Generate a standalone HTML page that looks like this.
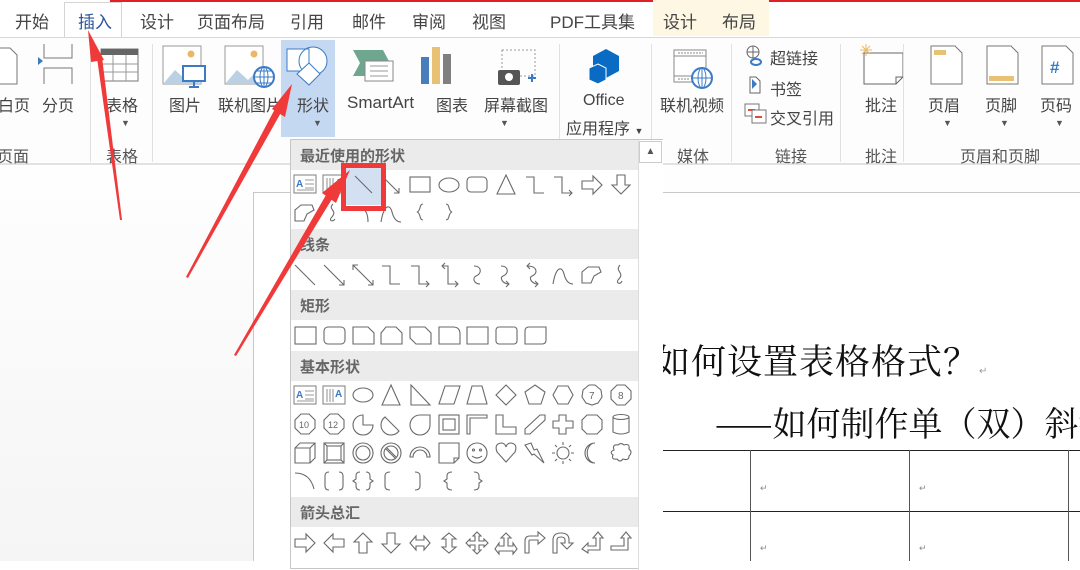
<!DOCTYPE html>
<html><head><meta charset="utf-8">
<style>
*{margin:0;padding:0;box-sizing:border-box}
body{width:1080px;height:561px;overflow:hidden;position:relative;font-family:"Liberation Sans","Noto Sans CJK SC",sans-serif;background:#fff;color:#444}
.a{position:absolute;white-space:nowrap}
.tab{position:absolute;top:8px;font-size:17px;color:#444}
.lb{position:absolute;font-size:16px;color:#444;white-space:nowrap}
.gl{position:absolute;top:143px;font-size:16px;color:#555;white-space:nowrap}
.sep{position:absolute;top:44px;width:1px;height:118px;background:#e1e1e1}
.dd{position:absolute;font-size:9px;color:#555}
.hd{position:absolute;left:0;width:347px;height:30px;background:#ebebeb;font-size:15px;font-weight:bold;color:#666;padding:5px 0 0 9px}
.doc{position:absolute;white-space:nowrap;color:#111;font-family:'Noto Serif CJK SC','Noto Sans CJK SC',serif}
</style></head><body>
<div class="a" style="left:110px;top:0;width:970px;height:2px;background:#e21f26"></div>
<div class="a" style="left:653px;top:0;width:116px;height:36px;background:#fdf7e4"></div>
<div class="a" style="left:64px;top:2px;width:58px;height:36px;background:#fff;border:1px solid #d4d4d4;border-bottom:none"></div>
<div class="tab" style="left:15px">开始</div>
<div class="tab" style="left:78px;color:#2b579a">插入</div>
<div class="tab" style="left:140px">设计</div>
<div class="tab" style="left:197px">页面布局</div>
<div class="tab" style="left:290px">引用</div>
<div class="tab" style="left:352px">邮件</div>
<div class="tab" style="left:412px">审阅</div>
<div class="tab" style="left:472px">视图</div>
<div class="tab" style="left:550px">PDF工具集</div>
<div class="tab" style="left:663px">设计</div>
<div class="tab" style="left:722px">布局</div>
<div class="a" style="left:0;top:37px;width:1080px;height:128px;background:#fdfdfd;border-top:1px solid #d8d8d8;border-bottom:2px solid #e2e2e2"></div>
<div class="a" style="left:0;top:167px;width:1080px;height:394px;background:linear-gradient(#fefefe,#f5f5f5)"></div>
<div class="a" style="left:281px;top:40px;width:54px;height:97px;background:#c5d8f1"></div>

<svg class="a" style="left:0;top:36px" width="1080" height="100" viewBox="0 36 1080 100">
 <path d="M-2 48 H10 L17 55 V84 H-2" fill="#fff" stroke="#777"/>
 <path d="M44 44 V58 H72 V44 M44 84 V68 H72 V84" fill="none" stroke="#777"/><path d="M38 57 L43 61 L38 65Z" fill="#3b7bc6"/>
 <rect x="101" y="49" width="37" height="32" fill="#fff" stroke="#777"/><rect x="101" y="49" width="37" height="6" fill="#666"/>
 <path d="M101 64H138M101 72H138M113 55V81M126 55V81" stroke="#999"/>
 <rect x="163" y="46" width="38" height="38" fill="#fff" stroke="#999"/><path d="M163 84 L175 70 L186 80 L192 74 L201 84Z" fill="#bcd0e3"/><circle cx="191" cy="54" r="3.5" fill="#e8b866"/>
 <rect x="183" y="66" width="22" height="15" fill="#fff" stroke="#3b7bc6" stroke-width="2"/><path d="M194 81V86M189 87H199" stroke="#3b7bc6" stroke-width="2"/>
 <rect x="225" y="46" width="38" height="38" fill="#fff" stroke="#999"/><path d="M225 84 L237 70 L248 80 L254 74 L263 84Z" fill="#bcd0e3"/><circle cx="254" cy="54" r="3.5" fill="#e8b866"/>
 <circle cx="264" cy="77" r="10" fill="#fff" stroke="#3b7bc6" stroke-width="2"/><path d="M254 77H274M264 67V87M257 71H271M257 83H271" stroke="#3b7bc6"/><ellipse cx="264" cy="77" rx="4" ry="10" fill="none" stroke="#3b7bc6"/>
 <rect x="287" y="49" width="22" height="22" fill="#fff" stroke="#3b7bc6"/><circle cx="313" cy="61" r="14" fill="#fff" stroke="#3b7bc6"/><rect x="287" y="49" width="22" height="22" fill="none" stroke="#3b7bc6"/><path d="M309 63 L320 74 L309 85 L297 74Z" fill="#fff" stroke="#3b7bc6"/>
 <path d="M353 50 H383 L390 63 L383 76 H353 L360 63Z" fill="#6fa68f"/><rect x="365" y="61" width="28" height="20" fill="#fff" stroke="#888"/><path d="M370 66H388M370 71H388M370 76H388" stroke="#999"/>
 <rect x="421" y="57" width="8" height="27" fill="#4a7ebb"/><rect x="432" y="47" width="8" height="37" fill="#e8c175"/><rect x="443" y="54" width="8" height="30" fill="#808080"/>
 <rect x="502" y="50" width="33" height="26" fill="none" stroke="#999" stroke-dasharray="2 2"/><rect x="498" y="70" width="22" height="15" rx="2" fill="#555"/><circle cx="509" cy="77" r="4" fill="#fff"/><path d="M528 78H536M532 74V82" stroke="#3b7bc6" stroke-width="2"/>
 <path d="M606 49 L619 56 V71 L606 78 L593 71 V56Z" fill="#0a6bc4"/><path d="M598 64 L606 68 V80 L598 84 L589 80 V68Z" fill="#0a6bc4" stroke="#fff"/>
 <rect x="674" y="50" width="32" height="32" fill="#fff" stroke="#888"/><path d="M674 56H706M674 76H706" stroke="#888"/><path d="M678 53H703M678 79H690" stroke="#888" stroke-dasharray="2 1"/>
 <circle cx="702" cy="78" r="10" fill="#fff" stroke="#3b7bc6" stroke-width="2"/><path d="M692 78H712M702 68V88" stroke="#3b7bc6"/><ellipse cx="702" cy="78" rx="4" ry="10" fill="none" stroke="#3b7bc6"/>
 <circle cx="753" cy="52" r="6" fill="none" stroke="#666"/><path d="M747 52H759M753 46V58" stroke="#666"/><ellipse cx="756" cy="62" rx="5" ry="3" fill="none" stroke="#3b7bc6" stroke-width="2"/>
 <path d="M750 77 V93 H760 V81 L756 77Z" fill="#fff" stroke="#666"/><path d="M752 79 L757 84 L752 89Z" fill="#3b7bc6"/>
 <rect x="745" y="104" width="14" height="12" fill="#fff" stroke="#777"/><path d="M748 110H755" stroke="#e04b3a" stroke-width="2"/><rect x="752" y="110" width="14" height="13" fill="#fff" stroke="#777"/><path d="M755 117H762" stroke="#e04b3a" stroke-width="2"/>
 <path d="M864 53 H903 V77 L896 84 H864Z" fill="#fff" stroke="#666"/><path d="M896 84 V77 H903" fill="none" stroke="#666"/><path d="M866 44V56M860 50H872M862 46L870 54M870 46L862 54" stroke="#e8b866"/>
 <path d="M931 46H955L962 53V84H931Z" fill="#fff" stroke="#777"/><rect x="934" y="50" width="12" height="5" fill="#e8c175"/>
 <path d="M987 46H1011L1018 53V84H987Z" fill="#fff" stroke="#777"/><rect x="989" y="76" width="25" height="5" fill="#e8c175"/>
 <path d="M1042 46H1066L1073 53V84H1042Z" fill="#fff" stroke="#777"/>
</svg>
<div class="a" style="left:1050px;top:58px;font-size:17px;color:#3b7bc6;font-weight:bold">#</div>

<div class="lb" style="left:-2px;top:92px">白页</div>
<div class="lb" style="left:42px;top:92px">分页</div>
<div class="lb" style="left:106px;top:92px">表格</div><div class="dd" style="left:121px;top:118px">▼</div>
<div class="lb" style="left:169px;top:92px">图片</div>
<div class="lb" style="left:218px;top:92px">联机图片</div>
<div class="lb" style="left:297px;top:92px">形状</div><div class="dd" style="left:313px;top:118px">▼</div>
<div class="lb" style="left:347px;top:93px;font-size:17px">SmartArt</div>
<div class="lb" style="left:436px;top:92px">图表</div>
<div class="lb" style="left:484px;top:92px">屏幕截图</div><div class="dd" style="left:500px;top:118px">▼</div>
<div class="lb" style="left:583px;top:92px">Office</div>
<div class="lb" style="left:566px;top:115px">应用程序 <span style="font-size:9px">▼</span></div>
<div class="lb" style="left:660px;top:92px">联机视频</div>
<div class="lb" style="left:770px;top:45px">超链接</div>
<div class="lb" style="left:770px;top:76px">书签</div>
<div class="lb" style="left:770px;top:105px">交叉引用</div>
<div class="lb" style="left:865px;top:92px">批注</div>
<div class="lb" style="left:928px;top:92px">页眉</div><div class="dd" style="left:943px;top:118px">▼</div>
<div class="lb" style="left:985px;top:92px">页脚</div><div class="dd" style="left:1000px;top:118px">▼</div>
<div class="lb" style="left:1040px;top:92px">页码</div><div class="dd" style="left:1055px;top:118px">▼</div>

<div class="gl" style="left:-3px">页面</div>
<div class="gl" style="left:106px">表格</div>
<div class="gl" style="left:677px">媒体</div>
<div class="gl" style="left:775px">链接</div>
<div class="gl" style="left:865px">批注</div>
<div class="gl" style="left:960px">页眉和页脚</div>
<div class="sep" style="left:90px"></div><div class="sep" style="left:152px"></div>
<div class="sep" style="left:559px"></div><div class="sep" style="left:651px"></div>
<div class="sep" style="left:731px"></div><div class="sep" style="left:840px"></div><div class="sep" style="left:903px"></div>

<div class="a" style="left:253px;top:192px;width:827px;height:369px;background:#fff;border-left:1px solid #c8c8c8;border-top:1px solid #c8c8c8;overflow:hidden">
 <div class="doc" style="left:401px;top:142px;font-size:35px;letter-spacing:1px">如何设置表格格式？<span style="font-size:10px;color:#999;letter-spacing:0">↵</span></div>
 <div class="doc" style="left:461px;top:204px;font-size:34px">——如何制作单（双）斜线表头</div>
 <div class="a" style="left:409px;top:257px;width:420px;height:1px;background:#222"></div>
 <div class="a" style="left:409px;top:318px;width:420px;height:1px;background:#222"></div>
 <div class="a" style="left:496px;top:257px;width:1px;height:120px;background:#555"></div>
 <div class="a" style="left:655px;top:257px;width:1px;height:120px;background:#555"></div>
 <div class="a" style="left:814px;top:257px;width:1px;height:120px;background:#555"></div>
 <div class="a" style="left:506px;top:290px;font-size:9px;color:#888">↵</div><div class="a" style="left:665px;top:290px;font-size:9px;color:#888">↵</div>
 <div class="a" style="left:506px;top:350px;font-size:9px;color:#888">↵</div><div class="a" style="left:665px;top:350px;font-size:9px;color:#888">↵</div>
</div>

<div class="a" style="left:290px;top:139px;width:373px;height:430px;background:#fff;border:1px solid #c6c6c6">
 <div class="hd" style="top:0">最近使用的形状</div>
 <div class="hd" style="top:89px">线条</div>
 <div class="hd" style="top:150px">矩形</div>
 <div class="hd" style="top:211px">基本形状</div>
 <div class="hd" style="top:357px">箭头总汇</div>
 <div class="a" style="left:347px;top:0;width:25px;height:430px;background:#fff;border-left:1px solid #ddd"></div>
 <div class="a" style="left:348px;top:1px;width:23px;height:22px;border:1px solid #ccc;font-size:10px;color:#555;text-align:center;line-height:20px">▲</div>
 <div class="a" style="left:54px;top:25px;width:38px;height:40px;background:#d3e0f1"></div>
</div>
<svg class="a" style="left:290px;top:139px" width="373" height="422" fill="none" stroke="#6a6a6a" stroke-width="1.1">
 <g transform="translate(4,35)"><rect x="0" y="1" width="22" height="18" fill="#fff" stroke="#888"/><text x="2" y="13" font-size="10" fill="#3b7bc6" stroke="none" font-weight="bold">A</text><path d="M11 6H20M11 10H20M11 14H20M3 16H20" stroke="#999"/></g>
 <g transform="translate(33,35)"><rect x="0" y="1" width="22" height="18" fill="#fff" stroke="#888"/><path d="M4 4V17M7 4V17M10 4V17" stroke="#999"/><text x="12" y="12" font-size="10" fill="#3b7bc6" stroke="none" font-weight="bold">A</text></g>
 <g transform="translate(62,35)"><path d="M3 2L20 19"/></g>
 <g transform="translate(90,35)"><path d="M2 2L19 19M14 19H19V14"/></g>
 <g transform="translate(119,35)"><rect x="1" y="3" width="20" height="15"/></g>
 <g transform="translate(148,35)"><ellipse cx="11" cy="11" rx="10" ry="7"/></g>
 <g transform="translate(176,35)"><rect x="1" y="3" width="20" height="15" rx="4"/></g>
 <g transform="translate(205,35)"><path d="M11 1L20 20H2Z"/></g>
 <g transform="translate(234,35)"><path d="M2 3H10V19H20"/></g>
 <g transform="translate(262,35)"><path d="M2 3H10V19H20M17 16L20 19L17 22"/></g>
 <g transform="translate(291,35)"><path d="M1 7H12V2L21 11L12 20V15H1Z"/></g>
 <g transform="translate(320,35)"><path d="M7 1H15V11H20L11 20L2 11H7Z"/></g>
 <g transform="translate(4,63)"><path d="M1 19V8L7 3H18L20 8L13 12L10 19Z"/></g>
 <g transform="translate(33,63)"><path d="M10 2C4 8 16 8 8 16C6 19 10 20 12 17"/></g>
 <g transform="translate(62,63)"><path d="M10 6C14 8 16 12 16 20"/></g>
 <g transform="translate(90,63)"><path d="M1 20C4 2 10 2 12 10C14 18 18 20 21 20"/></g>
 <g transform="translate(119,63)"><path d="M14 2C10 2 12 9 8 10C12 11 10 18 14 18"/></g>
 <g transform="translate(148,63)"><path d="M8 2C12 2 10 9 14 10C10 11 12 18 8 18"/></g>
 <g transform="translate(4,125)"><path d="M1 1L21 21"/></g>
 <g transform="translate(33,125)"><path d="M1 1L21 21M16 21H21V16"/></g>
 <g transform="translate(62,125)"><path d="M1 1L21 21M16 21H21V16M1 6V1H6"/></g>
 <g transform="translate(90,125)"><path d="M2 2H10V20H20"/></g>
 <g transform="translate(119,125)"><path d="M2 2H10V20H20M17 17L20 20L17 23"/></g>
 <g transform="translate(148,125)"><path d="M4 2H10V20H20M17 17L20 20L17 23M7 -1L4 2L7 5"/></g>
 <g transform="translate(176,125)"><path d="M8 2C16 2 16 10 10 12C6 14 8 20 14 20"/></g>
 <g transform="translate(205,125)"><path d="M6 2C14 2 14 10 8 12C4 14 8 20 14 20M11 17L14 20L11 23"/></g>
 <g transform="translate(234,125)"><path d="M3 2C14 2 14 10 8 12C4 14 8 20 14 20M11 17L14 20L11 23M6 -1L3 2L6 5"/></g>
 <g transform="translate(262,125)"><path d="M1 20C4 2 10 2 12 10C14 18 18 20 21 20"/></g>
 <g transform="translate(291,125)"><path d="M1 19V8L7 3H18L20 8L13 12L10 19Z"/></g>
 <g transform="translate(320,125)"><path d="M10 1C4 8 16 8 8 16C6 19 10 21 12 17"/></g>
 <g transform="translate(4,186)"><rect x="1" y="2" width="21" height="17"/></g>
 <g transform="translate(33,186)"><rect x="1" y="2" width="21" height="17" rx="4"/></g>
 <g transform="translate(62,186)"><path d="M1 2H16L22 8V19H1Z"/></g>
 <g transform="translate(90,186)"><path d="M6 2H16L22 8V19H1V8Z"/></g>
 <g transform="translate(119,186)"><path d="M1 2H16L22 8V19H7L1 13Z"/></g>
 <g transform="translate(148,186)"><path d="M1 2H15Q22 2 22 9V19H1Z"/></g>
 <g transform="translate(176,186)"><path d="M1 2H22V19H1Z"/></g>
 <g transform="translate(205,186)"><rect x="1" y="2" width="21" height="17" rx="3"/></g>
 <g transform="translate(234,186)"><path d="M5 2H22V15Q22 19 18 19H1V6Q1 2 5 2Z"/></g>
 <g transform="translate(4,246)"><rect x="0" y="1" width="22" height="18" fill="#fff" stroke="#888"/><text x="2" y="13" font-size="10" fill="#3b7bc6" stroke="none" font-weight="bold">A</text><path d="M11 6H20M11 10H20M11 14H20M3 16H20" stroke="#999"/></g>
 <g transform="translate(33,246)"><rect x="0" y="1" width="22" height="18" fill="#fff" stroke="#888"/><path d="M4 4V17M7 4V17M10 4V17" stroke="#999"/><text x="12" y="12" font-size="10" fill="#3b7bc6" stroke="none" font-weight="bold">A</text></g>
 <g transform="translate(62,246)"><ellipse cx="11" cy="10" rx="10" ry="7"/></g>
 <g transform="translate(90,246)"><path d="M11 0L20 20H2Z"/></g>
 <g transform="translate(119,246)"><path d="M2 0L21 20H2Z"/></g>
 <g transform="translate(148,246)"><path d="M7 1H22L16 19H1Z"/></g>
 <g transform="translate(176,246)"><path d="M6 1H16L21 19H1Z"/></g>
 <g transform="translate(205,246)"><path d="M11 0L21 10L11 20L1 10Z"/></g>
 <g transform="translate(234,246)"><path d="M11 0L21 7L17 19H5L1 7Z"/></g>
 <g transform="translate(262,246)"><path d="M6 1H16L21 10L16 19H6L1 10Z"/></g>
 <g transform="translate(291,246)"><path d="M8 0H14L20 5L21 12L17 18L11 20L5 18L1 12L2 5Z"/><text x="8" y="14" font-size="10" fill="#666" stroke="none">7</text></g>
 <g transform="translate(320,246)"><path d="M7 0H15L21 6V14L15 20H7L1 14V6Z"/><text x="8" y="14" font-size="10" fill="#666" stroke="none">8</text></g>
 <g transform="translate(4,275)"><path d="M7 0H15L21 6V14L15 20H7L1 14V6Z"/><text x="5" y="14" font-size="9" fill="#666" stroke="none">10</text></g>
 <g transform="translate(33,275)"><path d="M7 0H15L21 6V14L15 20H7L1 14V6Z"/><text x="5" y="14" font-size="9" fill="#666" stroke="none">12</text></g>
 <g transform="translate(62,275)"><path d="M11 1A10 10 0 1 0 21 11H11Z"/></g>
 <g transform="translate(90,275)"><path d="M5 3A10 10 0 1 0 19 17Z"/></g>
 <g transform="translate(119,275)"><path d="M21 1V11A10 10 0 1 1 11 1Z"/></g>
 <g transform="translate(148,275)"><rect x="1" y="1" width="20" height="19"/><rect x="5" y="5" width="12" height="11"/></g>
 <g transform="translate(176,275)"><path d="M1 20V1H21V4H4V20Z"/></g>
 <g transform="translate(205,275)"><path d="M1 1H8V13H21V20H1Z"/></g>
 <g transform="translate(234,275)"><path d="M1 20V15L16 1H21V6L6 20Z"/></g>
 <g transform="translate(262,275)"><path d="M7 1H14V7H21V14H14V20H7V14H1V7H7Z"/></g>
 <g transform="translate(291,275)"><path d="M6 1H16L21 6V15L16 20H6L1 15V6Z"/></g>
 <g transform="translate(320,275)"><path d="M3 3V18Q11 22 19 18V3"/><ellipse cx="11" cy="3" rx="8" ry="2.5"/></g>
 <g transform="translate(4,303)"><path d="M1 6H16V21H1ZM1 6L6 1H21V16L16 21M16 6L21 1"/></g>
 <g transform="translate(33,303)"><rect x="1" y="1" width="20" height="20"/><rect x="4" y="4" width="14" height="14"/><path d="M1 1L4 4M21 1L18 4M1 21L4 18M21 21L18 18"/></g>
 <g transform="translate(62,303)"><circle cx="11" cy="11" r="10"/><circle cx="11" cy="11" r="7"/></g>
 <g transform="translate(90,303)"><circle cx="11" cy="11" r="10"/><circle cx="11" cy="11" r="7"/><path d="M6 7L15 16M7 6L16 15"/></g>
 <g transform="translate(119,303)"><path d="M1 15A10 10 0 0 1 21 15H18A7 7 0 0 0 4 15Z"/></g>
 <g transform="translate(148,303)"><path d="M1 1H21V16L16 21H1Z M16 21V16H21"/></g>
 <g transform="translate(176,303)"><circle cx="11" cy="11" r="10"/><circle cx="7.5" cy="8" r="1"/><circle cx="14.5" cy="8" r="1"/><path d="M6 14Q11 18 16 14"/></g>
 <g transform="translate(205,303)"><path d="M11 20L2 10Q-1 2 6 1Q10 1 11 5Q12 1 16 1Q23 2 20 10Z"/></g>
 <g transform="translate(234,303)"><path d="M1 3L7 1L10 8L13 7L20 21L10 12L8 13Z"/></g>
 <g transform="translate(262,303)"><circle cx="11" cy="11" r="6"/><path d="M11 0V3M11 19V22M0 11H3M19 11H22M3 3L5 5M17 17L19 19M3 19L5 17M17 5L19 3"/></g>
 <g transform="translate(291,303)"><path d="M14 1A10 10 0 1 0 14 21A7 9 0 1 1 14 1Z"/></g>
 <g transform="translate(320,303)"><path d="M4 8Q2 2 8 3Q11 0 14 3Q20 1 19 7Q23 10 19 14Q19 19 13 17Q10 21 7 17Q1 18 3 13Q-1 10 4 8Z"/></g>
 <g transform="translate(4,332)"><path d="M1 2Q16 2 20 18"/></g>
 <g transform="translate(33,332)"><path d="M6 1Q2 1 2 5V15Q2 19 6 19M16 1Q20 1 20 5V15Q20 19 16 19"/></g>
 <g transform="translate(62,332)"><path d="M8 1Q4 1 4 5V8L1 10L4 12V15Q4 19 8 19M14 1Q18 1 18 5V8L21 10L18 12V15Q18 19 14 19"/></g>
 <g transform="translate(90,332)"><path d="M10 1Q5 1 5 5V15Q5 19 10 19"/></g>
 <g transform="translate(119,332)"><path d="M6 1Q11 1 11 5V15Q11 19 6 19"/></g>
 <g transform="translate(148,332)"><path d="M14 1Q9 1 9 5V8L6 10L9 12V15Q9 19 14 19"/></g>
 <g transform="translate(176,332)"><path d="M8 1Q13 1 13 5V8L16 10L13 12V15Q13 19 8 19"/></g>
 <g transform="translate(4,393)"><path d="M1 7H12V2L21 11L12 20V15H1Z"/></g>
 <g transform="translate(33,393)"><path d="M21 7H10V2L1 11L10 20V15H21Z"/></g>
 <g transform="translate(62,393)"><path d="M7 21V10H2L11 1L20 10H15V21Z"/></g>
 <g transform="translate(90,393)"><path d="M7 1V12H2L11 21L20 12H15V1Z"/></g>
 <g transform="translate(119,393)"><path d="M1 11L7 4V8H15V4L21 11L15 18V14H7V18Z"/></g>
 <g transform="translate(148,393)"><path d="M11 1L18 7H14V15H18L11 21L4 15H8V7H4Z"/></g>
 <g transform="translate(176,393)"><path d="M11 0L15 4H13V9H18V7L22 11L18 15V13H13V18H15L11 22L7 18H9V13H4V15L0 11L4 7V9H9V4H7Z"/></g>
 <g transform="translate(205,393)"><path d="M11 1L16 6H13V14H18V11L22 17L18 22V19H4V22L0 17L4 11V14H9V6H6Z"/></g>
 <g transform="translate(234,393)"><path d="M1 21V9Q1 4 6 4H14V0L21 6L14 12V8H6Q5 8 5 9V21Z"/></g>
 <g transform="translate(262,393)"><path d="M1 21V8Q1 1 9 1Q17 1 17 8V11H21L15 17L9 11H13V8Q13 5 9 5Q5 5 5 8V21Z"/></g>
 <g transform="translate(291,393)"><path d="M1 17L7 11V14H15V6H12L17 0L22 6H19V18H7V21Z"/></g>
 <g transform="translate(320,393)"><path d="M1 14H14V6H11L16 0L21 6H18V18H1Z"/></g>
</svg>

<div class="a" style="left:341px;top:163px;width:45px;height:48px;border:5px solid #f03a3a"></div>

<svg class="a" style="left:0;top:0" width="1080" height="561">
 <g fill="#f03a3a">
  <path d="M120 220 L97 58 L102 57 L122 220Z"/>
  <path d="M88 30 L104 60 L91 62Z"/>
  <path d="M186 277 L277 105 L283 109 L188 278Z"/>
  <path d="M292 84 L285 117 L272 109Z"/>
  <path d="M234 355 L326 195 L332 199 L236 356Z"/>
  <path d="M350 170 L336 203 L322 193Z"/>
 </g>
</svg>
</body></html>
